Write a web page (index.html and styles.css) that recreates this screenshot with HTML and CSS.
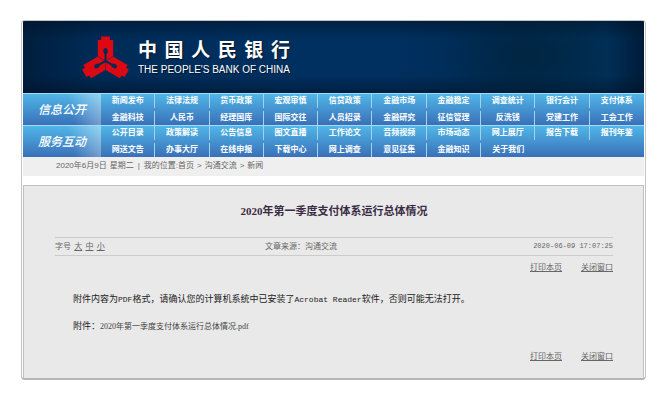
FILE: index.html
```html
<!DOCTYPE html>
<html lang="zh-CN">
<head>
    <meta charset="UTF-8">
    <meta name="viewport" content="width=device-width, initial-scale=1.0">
    <title>2020年第一季度支付体系运行总体情况</title>
    <link rel="stylesheet" href="styles.css">
</head>
<body>

    <div class="page">
        <header class="header">
            <svg class="logo" viewBox="-70 -74 140 124" aria-hidden="true">
                <defs>
                    <path id="arm" d="M-13 -73H13V-63H23V-14L3 -2V-22L6 -25V-34Q5 -38 0 -39Q-5 -38 -6 -34V-25L-3 -22V-2L-23 -14V-63H-13Z"/>
                </defs>
                <use href="#arm"/>
                <use href="#arm" transform="rotate(120)"/>
                <use href="#arm" transform="rotate(240)"/>
            </svg>
            <div class="brand">
                <h1>中国人民银行</h1>
                <p>THE PEOPLE'S BANK OF CHINA</p>
            </div>
        </header>

        <nav class="nav">
            <div class="nav-row">
                <strong class="nav-label">信息公开</strong>
                <div class="nav-links">
                    <a href="#">新闻发布</a>
                    <a href="#">法律法规</a>
                    <a href="#">货币政策</a>
                    <a href="#">宏观审慎</a>
                    <a href="#">信贷政策</a>
                    <a href="#">金融市场</a>
                    <a href="#">金融稳定</a>
                    <a href="#">调查统计</a>
                    <a href="#">银行会计</a>
                    <a href="#">支付体系</a>
                    <a href="#">金融科技</a>
                    <a href="#">人民币</a>
                    <a href="#">经理国库</a>
                    <a href="#">国际交往</a>
                    <a href="#">人员招录</a>
                    <a href="#">金融研究</a>
                    <a href="#">征信管理</a>
                    <a href="#">反洗钱</a>
                    <a href="#">党建工作</a>
                    <a href="#">工会工作</a>
                </div>
            </div>
            <div class="nav-row">
                <strong class="nav-label">服务互动</strong>
                <div class="nav-links">
                    <a href="#">公开目录</a>
                    <a href="#">政策解读</a>
                    <a href="#">公告信息</a>
                    <a href="#">图文直播</a>
                    <a href="#">工作论文</a>
                    <a href="#">音频视频</a>
                    <a href="#">市场动态</a>
                    <a href="#">网上展厅</a>
                    <a href="#">报告下载</a>
                    <a href="#">报刊年鉴</a>
                    <a href="#">网送文告</a>
                    <a href="#">办事大厅</a>
                    <a href="#">在线申报</a>
                    <a href="#">下载中心</a>
                    <a href="#">网上调查</a>
                    <a href="#">意见征集</a>
                    <a href="#">金融知识</a>
                    <a href="#">关于我们</a>
                </div>
            </div>
        </nav>

        <!-- Date and current position -->
        <div class="position">
            <span>2020年6月9日</span>
            <span>星期二</span>
            <span class="divider">|</span>
            <span>我的位置:<a href="#">首页</a></span>
            <span>&gt;</span>
            <a href="#">沟通交流</a>
            <span>&gt;</span>
            <a href="#">新闻</a>
        </div>

        <main class="article">
            <h2>2020年第一季度支付体系运行总体情况</h2>
            <div class="info">
                <div class="font-size">字号 <a href="#">大</a> <a href="#">中</a> <a href="#">小</a></div>
                <div class="source">文章来源：沟通交流</div>
                <time class="date" datetime="2020-06-09T17:07:25">2020-06-09 17:07:25</time>
            </div>
            <div class="tools">
                <a href="#">打印本页</a>
                <a href="#">关闭窗口</a>
            </div>
            <div class="content">
                <p>附件内容为<span class="latin">PDF</span>格式，请确认您的计算机系统中已安装了<span class="latin">Acrobat Reader</span>软件，否则可能无法打开。</p>
                <p>附件：<a href="#">2020年第一季度支付体系运行总体情况.pdf</a></p>
            </div>
            <div class="tools">
                <a href="#">打印本页</a>
                <a href="#">关闭窗口</a>
            </div>
        </main>
    </div>

</body>
</html>
```

FILE: styles.css
```css
/* Reset styles */
* {
    margin: 0;
    padding: 0;
    box-sizing: border-box;
}

body {
    padding: 20px 22px 20px 21px;
    background-color: #fff;
    color: #666;
    font: 8px/12px "Liberation Sans", "Noto Sans CJK SC", sans-serif;
}

a {
    color: inherit;
    text-decoration: none;
}

/* Page frame */
.page {
    padding: 0 1px;
    border: 1px solid #c2c4c8;
    border-bottom: 2px solid #b4b5b9;
    border-radius: 4px;
    overflow: hidden;
}

/* Header */
.header {
    display: flex;
    align-items: center;
    height: 72px;
    padding-left: 59px;
    background:
        radial-gradient(ellipse 90px 60px at 82% 50%, rgba(0, 35, 58, 0.7), transparent),
        linear-gradient(to bottom, rgba(0, 15, 35, 0.5), transparent 25%, transparent 75%, rgba(0, 15, 35, 0.5)),
        linear-gradient(to right, #001e3d, #002b57 12%, #003060 40%, #003060 60%, #002a50 80%, #003058 94%, #001b38);
}

.logo {
    width: 47px;
    height: 42px;
    fill: #dc0812;
}

.brand {
    margin-left: 9px;
    color: #fff;
    text-shadow: 1px 1px 1px #00142c;
}

.brand h1 {
    width: 0;
    min-width: 100%;
    font-size: 19px;
    line-height: 26px;
    font-weight: bold;
    text-align: justify;
    text-align-last: justify;
}

.brand p {
    font-size: 10px;
    line-height: 12px;
    white-space: nowrap;
}

/* Navigation */
.nav {
    color: #fff;
    font-weight: bold;
}

.nav-row {
    display: flex;
    border-top: 1px solid #a4dcf5;
    background: linear-gradient(to bottom, #50b6e8, #3a70b8);
}

.nav-label {
    display: flex;
    align-items: center;
    justify-content: center;
    width: 78px;
    background: linear-gradient(75deg, transparent 60%, rgba(255, 255, 255, 0.4));
    font-size: 12px;
    font-style: italic;
    font-weight: 500;
}

.nav-links {
    flex: 1;
    display: grid;
    grid-template-columns: repeat(10, 1fr);
    row-gap: 3px;
}

.nav-links a {
    border-right: 1px solid #a3d2ee;
    line-height: 14px;
    text-align: center;
    white-space: nowrap;
}

.nav-links a:nth-child(10n),
.nav-links a:last-child {
    border-right: none;
}

/* Current position */
.position {
    display: flex;
    gap: 3px;
    padding: 3px 33px 4px;
    background-color: #efefef;
}

.divider {
    padding: 0 1px;
}

/* Article */
.article {
    margin-top: 9px;
    padding: 17px 30px 15px 31px;
    border: 1px solid #bcc0c9;
    border-bottom: none;
    background-color: #e9e9e9;
}

.article h2 {
    color: #3a2c44;
    font-family: "Liberation Serif", "Noto Sans CJK SC", serif;
    font-size: 11px;
    line-height: 16px;
    text-align: center;
}

.info {
    display: grid;
    grid-template-columns: 1fr 1fr 1fr;
    align-items: center;
    margin-top: 18px;
    border-top: 1px solid #ccc;
    border-bottom: 1px solid #ccc;
    line-height: 17px;
}

.font-size a,
.tools a {
    text-decoration: underline;
}

.font-size a {
    margin-left: 1px;
}

.source {
    padding-left: 24px;
}

.date {
    font-family: "Liberation Mono", monospace;
    font-size: 7px;
    text-align: right;
}

.tools {
    display: flex;
    justify-content: flex-end;
    gap: 19px;
    padding-top: 6px;
}

.content {
    padding: 12px 18px 5px;
    color: #222;
    font-size: 9px;
    line-height: 26px;
}

.content a {
    color: #444;
    font-family: "Liberation Serif", "Noto Sans CJK SC", serif;
    font-size: 8px;
}

.latin {
    font-family: "Liberation Mono", monospace;
    font-size: 8px;
}
```
